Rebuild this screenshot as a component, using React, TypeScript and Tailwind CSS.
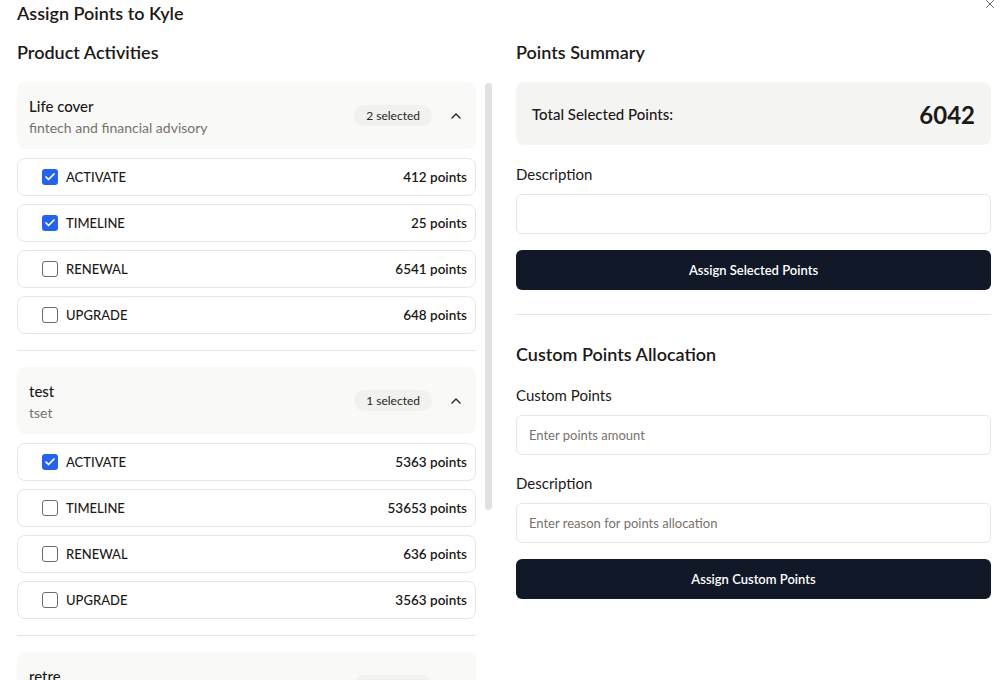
import React from 'react';
import { Check, ChevronUp, X } from 'lucide-react';

interface Activity {
  name: string;
  points: number;
  checked: boolean;
}

interface Product {
  title: string;
  subtitle: string;
  selected: number;
  activities: Activity[];
}

const products: Product[] = [
  {
    title: 'Life cover',
    subtitle: 'fintech and financial advisory',
    selected: 2,
    activities: [
      { name: 'ACTIVATE', points: 412, checked: true },
      { name: 'TIMELINE', points: 25, checked: true },
      { name: 'RENEWAL', points: 6541, checked: false },
      { name: 'UPGRADE', points: 648, checked: false },
    ],
  },
  {
    title: 'test',
    subtitle: 'tset',
    selected: 1,
    activities: [
      { name: 'ACTIVATE', points: 5363, checked: true },
      { name: 'TIMELINE', points: 53653, checked: false },
      { name: 'RENEWAL', points: 636, checked: false },
      { name: 'UPGRADE', points: 3563, checked: false },
    ],
  },
  {
    title: 'retre',
    subtitle: 'retre',
    selected: 0,
    activities: [],
  },
];

const CheckBox = ({ checked }: { checked: boolean }) =>
  checked ? (
    <span className="w-4 h-4 rounded-[3px] bg-[#2563eb] flex items-center justify-center">
      <Check className="w-3 h-3 text-white" strokeWidth={3.5} />
    </span>
  ) : (
    <span className="w-4 h-4 rounded-[3px] border border-[#6b6b6b] bg-white" />
  );

const ProductGroup = ({ product, last }: { product: Product; last: boolean }) => (
  <div className={last ? '' : 'pb-4 mb-4 border-b border-[#e7e5e4]'}>
    <div className="h-[67px] rounded-lg bg-[#f9f9f8] flex items-center justify-between pl-3 pr-3">
      <div className="flex flex-col pt-[3px]">
        <span className="text-[15px] font-medium text-[#1c1917] leading-[20px]">{product.title}</span>
        <span className="text-[14px] text-[#78716c] leading-[20px] mt-[2px]">{product.subtitle}</span>
      </div>
      <div className="flex items-center gap-4">
        <span className="h-[21px] px-3 rounded-full bg-[#f1f1ef] text-[12px] text-[#292524] flex items-center">
          {product.selected} selected
        </span>
        <ChevronUp className="w-4 h-4 text-[#292524]" strokeWidth={2} />
      </div>
    </div>
    {product.activities.length > 0 && (
      <div className="flex flex-col gap-2 mt-[9px]">
        {product.activities.map((a) => (
          <div
            key={a.name}
            className="h-[38px] rounded-lg border border-[#e7e5e4] flex items-center justify-between pl-6 pr-2"
          >
            <div className="flex items-center gap-2">
              <CheckBox checked={a.checked} />
              <span className="text-[13px] font-medium text-[#1c1917] pt-[2px]">{a.name}</span>
            </div>
            <span className="text-[13.5px] font-semibold text-[#1c1917] pt-[1px]">{a.points} points</span>
          </div>
        ))}
      </div>
    )}
  </div>
);

const Field = ({ label, placeholder, className }: { label: string; placeholder?: string; className?: string }) => (
  <div className={className}>
    <label className="block text-[15px] text-[#1c1917] leading-[20px]">{label}</label>
    <input
      className="mt-[10px] w-full h-10 rounded-md border border-[#e5e5e5] px-3 text-[13px] outline-none placeholder:text-[#78716c]"
      placeholder={placeholder}
    />
  </div>
);

export default function App() {
  return (
    <div className="w-[1008px] h-[680px] overflow-hidden bg-white relative font-['Lato',sans-serif] text-[#1c1917]">
      <X className="absolute right-[11px] top-[-3px] w-[14px] h-[14px] text-[#525252]" strokeWidth={1.5} />
      <div className="pl-[17px] pr-[17px] pt-[1px]">
        <h2 className="text-[18px] font-semibold leading-[24px]">Assign Points to Kyle</h2>
        <div className="grid grid-cols-2 gap-6 mt-[15px]">
          {/* left column */}
          <div>
            <h3 className="text-[18px] font-semibold leading-[24px]">Product Activities</h3>
            <div className="relative mt-[18px] h-[620px] overflow-hidden pr-4">
              {products.map((p, i) => (
                <ProductGroup key={p.title} product={p} last={i === products.length - 1} />
              ))}
              <div className="absolute right-0 top-[1px] w-[7px] h-[427px] rounded-full bg-[#e1e1e1]" />
            </div>
          </div>

          {/* right column */}
          <div>
            <h3 className="text-[18px] font-semibold leading-[24px]">Points Summary</h3>
            <div className="mt-[18px] h-[63px] rounded-lg bg-[#f4f4f3] flex items-center justify-between px-4">
              <span className="text-[15px] font-medium pt-[2px]">Total Selected Points:</span>
              <span className="text-[24px] font-bold pt-[2px]">6042</span>
            </div>
            <Field label="Description" className="mt-[19px]" />
            <button className="mt-4 w-full h-10 rounded-md bg-[#111827] text-white text-[13px] font-semibold pt-[2px]">
              Assign Selected Points
            </button>
            <div className="mt-6 border-t border-[#e5e5e5]" />
            <h3 className="mt-[27px] text-[18px] font-semibold leading-[24px]">Custom Points Allocation</h3>
            <Field label="Custom Points" placeholder="Enter points amount" className="mt-[19px]" />
            <Field label="Description" placeholder="Enter reason for points allocation" className="mt-[18px]" />
            <button className="mt-4 w-full h-10 rounded-md bg-[#111827] text-white text-[13px] font-semibold pt-[2px]">
              Assign Custom Points
            </button>
          </div>
        </div>
      </div>
    </div>
  );
}
